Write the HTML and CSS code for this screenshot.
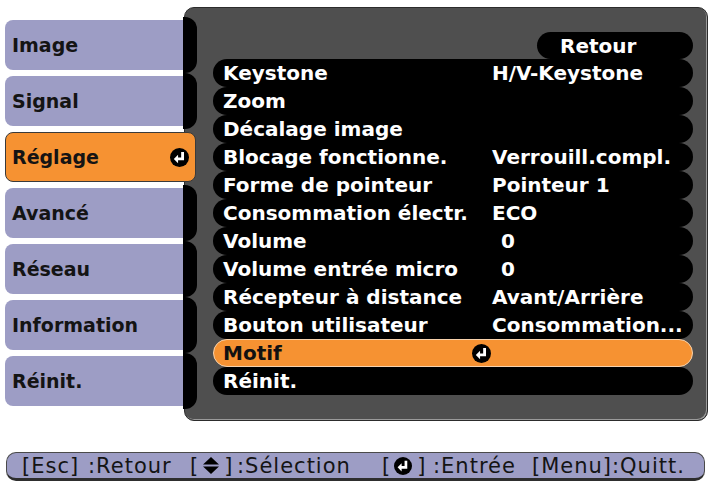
FILE: index.html
```html
<!DOCTYPE html>
<html lang="fr">
<head>
<meta charset="utf-8">
<title>Réglage</title>
<link rel="stylesheet" href="styles.css">
</head>
<body>
<div class="screen">
  <div class="top">
    <nav class="tabs">
      <div class="tab"><span class="tab-body">Image</span><span class="cap"></span></div>
      <div class="tab"><span class="tab-body">Signal</span><span class="cap"></span></div>
      <div class="tab active"><span class="tab-body">Réglage
        <svg class="enter big" viewBox="0 0 16 16"><circle cx="8" cy="8" r="8" fill="#000"/><path d="M10.6 3.4V9.2H5.4" fill="none" stroke="#fff" stroke-width="2.4"/><path d="M3.2 9.2L6.8 5.6V12.8Z" fill="#fff"/></svg></span></div>
      <div class="tab"><span class="tab-body">Avancé</span><span class="cap"></span></div>
      <div class="tab"><span class="tab-body">Réseau</span><span class="cap"></span></div>
      <div class="tab"><span class="tab-body">Information</span><span class="cap"></span></div>
      <div class="tab"><span class="tab-body">Réinit.</span><span class="cap"></span></div>
    </nav>
    <section class="panel">
      <div class="back-row"><span class="back">Retour</span></div>
      <ul class="rows">
        <li><span class="label">Keystone</span><span class="value">H/V-Keystone</span></li>
        <li><span class="label">Zoom</span><span class="value"></span></li>
        <li><span class="label">Décalage image</span><span class="value"></span></li>
        <li><span class="label">Blocage fonctionne.</span><span class="value">Verrouill.compl.</span></li>
        <li><span class="label">Forme de pointeur</span><span class="value">Pointeur 1</span></li>
        <li><span class="label">Consommation électr.</span><span class="value">ECO</span></li>
        <li><span class="label">Volume</span><span class="value num">0</span></li>
        <li><span class="label">Volume entrée micro</span><span class="value num">0</span></li>
        <li><span class="label">Récepteur à distance</span><span class="value">Avant/Arrière</span></li>
        <li><span class="label">Bouton utilisateur</span><span class="value">Consommation...</span></li>
        <li class="selected"><span class="label">Motif</span><span class="value icon-value"><svg class="enter big" viewBox="0 0 16 16"><circle cx="8" cy="8" r="8" fill="#000"/><path d="M10.6 3.4V9.2H5.4" fill="none" stroke="#fff" stroke-width="2.4"/><path d="M3.2 9.2L6.8 5.6V12.8Z" fill="#fff"/></svg></span></li>
        <li><span class="label">Réinit.</span><span class="value"></span></li>
      </ul>
    </section>
  </div>
  <footer class="help">
    <span class="seg w-esc">[Esc]</span>
    <span class="seg w-ret">:Retour</span>
    <span class="seg w-key">[<svg class="updown" viewBox="0 0 16 17" width="16" height="17"><path d="M0 7.6L8 0L16 7.6Z" fill="#000"/><path d="M0 9.4L8 17L16 9.4Z" fill="#000"/></svg>]</span>
    <span class="seg w-sel">:Sélection</span>
    <span class="seg w-key2">[<svg class="enter small" viewBox="0 0 16 16"><circle cx="8" cy="8" r="8" fill="#000"/><path d="M10.6 3.4V9.2H5.4" fill="none" stroke="#fff" stroke-width="2.4"/><path d="M3.2 9.2L6.8 5.6V12.8Z" fill="#fff"/></svg>]</span>
    <span class="seg w-ent">:Entrée</span>
    <span class="seg w-menu">[Menu]</span>
    <span class="seg">:Quitt.</span>
  </footer>
</div>
</body>
</html>
```
FILE: styles.css
```css
html, body {
  margin: 0;
  padding: 0;
  background: #ffffff;
}
body {
  width: 712px;
  height: 484px;
  overflow: hidden;
  font-family: "DejaVu Sans", "Liberation Sans", sans-serif;
}
.screen {
  display: flex;
  flex-direction: column;
}
.top {
  display: flex;
  align-items: flex-start;
  padding: 7px 4px 0 5px;
}
.tabs {
  display: flex;
  flex-direction: column;
  gap: 6px;
  width: 192px;
  margin-top: 13px;
  margin-right: -13px;
  position: relative;
  z-index: 2;
}
.tab {
  display: flex;
  height: 50px;
}
.tab-body {
  box-sizing: border-box;
  width: 178px;
  height: 50px;
  background: #9d9dc5;
  border-radius: 8px 0 0 8px;
  display: flex;
  align-items: center;
  padding-left: 7px;
  font-weight: bold;
  font-size: 19px;
  color: #141414;
}
.cap {
  width: 14px;
  height: 56px;
  margin-top: -3px;
  background: #000;
  border-radius: 0 12px 12px 0;
}
.tab.active .tab-body {
  width: 191px;
  background: #f69232;
  border: 1px solid #3a3a3a;
  border-radius: 8px;
  padding-left: 6px;
  padding-right: 6px;
  justify-content: space-between;
}
.enter {
  display: block;
}
.enter.big {
  width: 19px;
  height: 19px;
}
.enter.small {
  width: 18px;
  height: 18px;
}
.panel {
  box-sizing: border-box;
  width: 524px;
  height: 414px;
  background: #4f4f4f;
  border: 1px solid #2c2c2c;
  border-radius: 10px;
  box-shadow: inset -1px -1px 0 #9a9a9a;
  padding: 24px 14px 0 28px;
  color: #fff;
  font-weight: bold;
  font-size: 20px;
}
.back-row {
  display: flex;
  justify-content: flex-end;
}
.back {
  box-sizing: border-box;
  width: 156px;
  height: 27px;
  background: #000;
  border-radius: 14px;
  padding-left: 23px;
  display: flex;
  align-items: center;
}
.rows {
  list-style: none;
  margin: 0;
  padding: 0;
  display: flex;
  flex-direction: column;
}
.rows li {
  box-sizing: border-box;
  height: 28px;
  background: #000;
  border-radius: 14px;
  display: flex;
  align-items: center;
  padding-left: 10px;
  white-space: nowrap;
}
.label {
  width: 269px;
  flex: none;
}
.value.num {
  padding-left: 9px;
}
.rows li.selected {
  background: #f69232;
  border: 1px solid #f7d2ad;
  color: #111;
  padding-left: 9px;
}
.icon-value {
  margin-left: -20px;
}
.help {
  box-sizing: border-box;
  height: 29px;
  margin: 31px 7px 0 6px;
  background: #9d9dc5;
  border: 1px solid #4a4a4a;
  border-bottom: 3px solid #2e2e2e;
  border-radius: 10px;
  display: flex;
  align-items: center;
  padding-left: 15px;
  font-size: 21px;
  letter-spacing: 1px;
  color: #141414;
  white-space: nowrap;
}
.seg {
  flex: none;
  display: flex;
  align-items: center;
}
.w-esc { width: 66px; }
.w-ret { width: 102px; }
.w-key { width: 47px; }
.w-key .updown { margin: 0 5px 0 4px; }
.w-sel { width: 145px; }
.w-key2 { width: 51px; }
.w-key2 .enter { margin: 0 5px 0 3px; }
.w-ent { width: 99px; }
.w-menu { width: 80px; }
```
